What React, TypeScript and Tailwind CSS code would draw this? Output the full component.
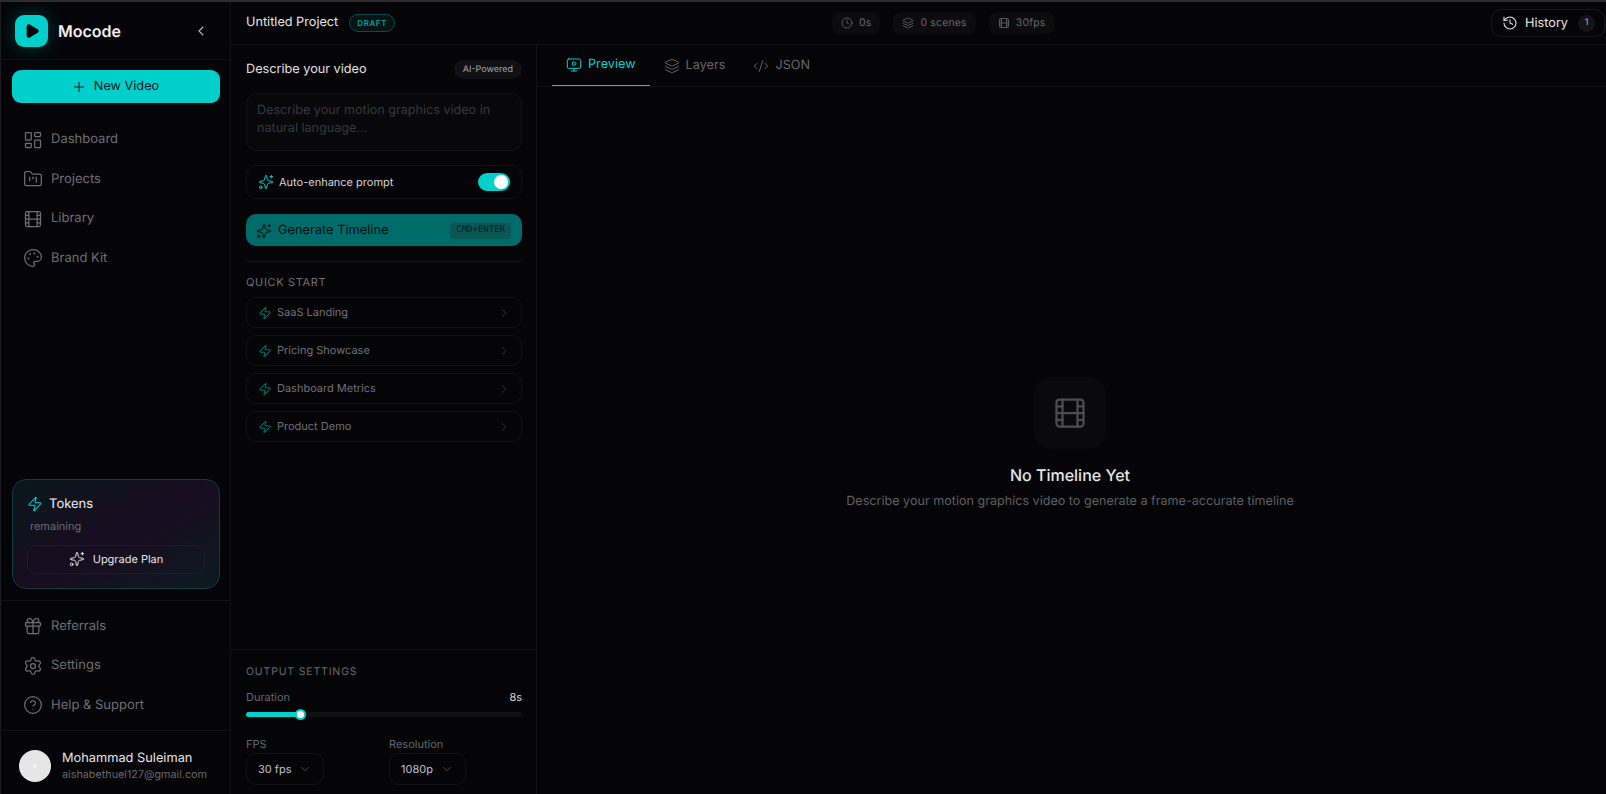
import React from "react";
import { Plus, LayoutDashboard, FolderKanban, Palette, Gift, Settings, CircleHelp, Zap, Sparkles, ChevronLeft, ChevronRight, ChevronDown, Play, History, Clock, Layers, MonitorPlay, CodeXml } from "lucide-react";

function Film({ className, strokeWidth = 2 }: { className?: string; strokeWidth?: number }) {
  return (
    <svg className={className} viewBox="0 0 24 24" fill="none" stroke="currentColor" strokeWidth={strokeWidth} strokeLinecap="round" strokeLinejoin="round">
      <rect width="18" height="18" x="3" y="3" rx="2" />
      <path d="M7 3v18" />
      <path d="M3 7.5h4" />
      <path d="M3 12h18" />
      <path d="M3 16.5h4" />
      <path d="M17 3v18" />
      <path d="M17 7.5h4" />
      <path d="M17 16.5h4" />
    </svg>
  );
}

function NavItem({ icon: Icon, label }: { icon: any; label: string }) {
  return (
    <div className="flex h-[39.5px] items-center gap-[8px] pl-[11px] text-[13px] text-[#6e6e73]">
      <Icon className="h-[20px] w-[20px]" strokeWidth={1.5} />
      <span>{label}</span>
    </div>
  );
}

function Chip({ icon: Icon, label }: { icon: any; label: string }) {
  return (
    <div className="flex h-[22px] items-center gap-[6px] rounded-[8px] bg-[#0c0c0f] px-[9px] text-[10.4px] tracking-[0.02em] text-[#66666b]">
      <Icon className="h-[12px] w-[12px]" strokeWidth={1.6} />
      <span>{label}</span>
    </div>
  );
}

function Quick({ label }: { label: string }) {
  return (
    <div className="flex h-[31px] items-center rounded-[10px] border border-[#131316] pl-[11px] pr-[10px] text-[11px] text-[#707075]">
      <Zap className="h-[14px] w-[14px] text-[#008480]" strokeWidth={1.6} />
      <span className="ml-[5px]">{label}</span>
      <ChevronRight className="ml-auto h-[14px] w-[14px] text-[#3c3c40]" strokeWidth={1.5} />
    </div>
  );
}

function Tab({ icon: Icon, label, active }: { icon: any; label: string; active?: boolean }) {
  return (
    <div className={`flex h-[41px] items-center gap-[6px] px-[14px] text-[12.7px] ${active ? "border-b border-[#00cfcb] text-[#00cfcb]" : "text-[#66666b]"}`}>
      <Icon className="h-[16px] w-[16px]" strokeWidth={1.5} />
      <span>{label}</span>
    </div>
  );
}

function Select({ label, value, w }: { label: string; value: string; w: string }) {
  return (
    <div className="flex flex-col">
      <span className="text-[11px] leading-[14px] text-[#66666b]">{label}</span>
      <div className={`mt-[2px] flex h-[32px] items-center justify-between rounded-[10px] border border-[#141417] pl-[11px] pr-[11px] text-[11px] text-[#c4c4c8] ${w}`}>
        <span>{value}</span>
        <ChevronDown className="h-[14px] w-[14px] text-[#55555a]" strokeWidth={1.5} />
      </div>
    </div>
  );
}

export default function App() {
  return (
    <div className="flex h-[794px] w-[1606px] flex-col overflow-hidden bg-[#050508] text-white antialiased [text-rendering:geometricPrecision]" style={{ fontFamily: "Inter, 'Noto Sans', sans-serif" }}>
      <div className="h-[2px] shrink-0 bg-[#2c2c30]" />
      <div className="flex min-h-0 flex-1 border-l border-[#1c1c20]">
        <aside className="flex w-[230px] shrink-0 flex-col border-r border-[#131316]">
          <div className="flex h-[58px] shrink-0 items-center border-b border-[#111114] pl-[14px] pr-[21px]">
            <div className="flex h-[32px] w-[33px] items-center justify-center rounded-[9px] bg-[#00cfcb] shadow-[0_0_18px_rgba(0,207,203,0.28)]">
              <Play className="h-[16px] w-[16px] fill-[#05050a] text-[#05050a]" strokeWidth={2} />
            </div>
            <span className="ml-[10px] text-[16px] font-semibold text-[#f0f0f0]">Mocode</span>
            <ChevronLeft className="ml-auto h-[16px] w-[16px] text-[#b5b5b8]" strokeWidth={1.6} />
          </div>
          <div className="pl-[11px] pr-[10px] pt-[10px]">
            <div className="flex h-[33px] items-center justify-center gap-[7px] rounded-[9px] bg-[#00cfcb] pr-[2px] pt-[1px] text-[12.7px] text-[#06161a]">
              <Plus className="h-[16px] w-[16px]" strokeWidth={1.5} />
              <span>New Video</span>
            </div>
          </div>
          <nav className="flex flex-col px-[11px] pt-[17px]">
            <NavItem icon={LayoutDashboard} label="Dashboard" />
            <NavItem icon={FolderKanban} label="Projects" />
            <NavItem icon={Film} label="Library" />
            <NavItem icon={Palette} label="Brand Kit" />
          </nav>
          <div className="mt-auto pb-[11px] pl-[11px] pr-[10px]">
            <div className="h-[110px] rounded-[14px] border border-[#0f3d42] bg-gradient-to-br from-[#07171b] via-[#180c20] to-[#0a1a1f] px-[14px] pt-[15px]">
              <div className="flex items-center gap-[6px] text-[13px] text-[#eeeeee]">
                <Zap className="h-[16px] w-[16px] text-[#00cfcb]" strokeWidth={1.6} />
                <span>Tokens</span>
              </div>
              <div className="mt-[4px] pl-[3px] text-[11px] text-[#6a6a70]">remaining</div>
              <div className="mt-[10px] flex h-[29px] items-center justify-center gap-[8px] rounded-[9px] border border-[#1d1d22] text-[11px] text-[#e5e5e5]">
                <Sparkles className="h-[16px] w-[16px]" strokeWidth={1.5} />
                <span>Upgrade Plan</span>
              </div>
            </div>
          </div>
          <div className="flex flex-col border-t border-[#131316] px-[11px] pb-[5px] pt-[6px]">
            <NavItem icon={Gift} label="Referrals" />
            <NavItem icon={Settings} label="Settings" />
            <NavItem icon={CircleHelp} label="Help & Support" />
          </div>
          <div className="flex h-[64px] shrink-0 items-center gap-[11px] border-t border-[#131316] pl-[18px] pt-[7px]">
            <div className="flex h-[32px] w-[32px] items-center justify-center rounded-full bg-[#e6e6e6]">
              <div className="h-[4px] w-[4px] rounded-full bg-[#f4f4f4]" />
            </div>
            <div className="flex flex-col">
              <span className="pt-[1px] text-[12.8px] leading-[16px] text-[#e5e5e5]">Mohammad Suleiman</span>
              <span className="text-[10.8px] leading-[15px] text-[#66666b]">aishabethuel127@gmail.com</span>
            </div>
          </div>
        </aside>
        <div className="flex min-w-0 flex-1 flex-col">
          <header className="relative flex h-[43px] shrink-0 items-center border-b border-[#111114] pl-[15px] pr-[1px]">
            <span className="text-[12.7px] text-[#e5e5e5]">Untitled Project</span>
            <span className="ml-[11px] flex h-[18px] items-center rounded-full border border-[#0b4a4c] bg-[#061414] px-[7px] text-[8px] font-medium tracking-[0.08em] text-[#00b5b1]">DRAFT</span>
            <div className="absolute left-[601px] top-[10px] flex gap-[13px]">
              <Chip icon={Clock} label="0s" />
              <Chip icon={Layers} label="0 scenes" />
              <Chip icon={Film} label="30fps" />
            </div>
            <div className="ml-auto flex h-[28px] items-center gap-[7px] rounded-[10px] border border-[#19191d] pl-[10px] pr-[9px] text-[12.7px] text-[#e5e5e5]">
              <History className="h-[16px] w-[16px]" strokeWidth={1.6} />
              <span className="pt-[1px]">History</span>
              <span className="ml-[3px] flex h-[17px] w-[17px] items-center justify-center rounded-full bg-[#151518] text-[9px] text-[#b0b0b4]">1</span>
            </div>
          </header>
          <div className="flex min-h-0 flex-1">
            <section className="flex w-[306px] shrink-0 flex-col border-r border-[#131316]">
              <div className="flex-1 pl-[15px] pr-[14px] pt-[15px]">
                <div className="flex h-[19px] items-center justify-between">
                  <span className="pt-[1px] text-[12.7px] text-[#e0e0e0]">Describe your video</span>
                  <span className="flex h-[19px] items-center rounded-full bg-[#111115] px-[9px] text-[9px] text-[#a5a5aa]">AI-Powered</span>
                </div>
                <div className="mt-[14px] h-[58px] rounded-[10px] border border-[#131316] bg-[#08080a] px-[10px] py-[8px] text-[12.6px] leading-[18px] text-[#38383c]">
                  Describe your motion graphics video in natural language...
                </div>
                <div className="mt-[14px] flex h-[34px] items-center rounded-[10px] border border-[#131316] pl-[11px] pr-[11px] text-[11px] text-[#d5d5d8]">
                  <Sparkles className="h-[16px] w-[16px] text-[#00cfcb]" strokeWidth={1.5} />
                  <span className="ml-[5px]">Auto-enhance prompt</span>
                  <div className="ml-auto flex h-[18px] w-[32px] items-center justify-end rounded-full bg-[#00cfcb] pr-[2px]">
                    <div className="h-[14px] w-[14px] rounded-full bg-white" />
                  </div>
                </div>
                <div className="mt-[15px] flex h-[32px] items-center rounded-[10px] bg-[#006b68] pl-[10px] pr-[11px] pt-[1px] text-[12.8px] text-[#040f10]">
                  <Sparkles className="h-[16px] w-[16px]" strokeWidth={1.5} />
                  <span className="ml-[6px]">Generate Timeline</span>
                  <span className="ml-auto flex h-[16px] items-center rounded-[4px] bg-[#0a5856] px-[6px] text-[9px] text-[#06201f]" style={{ fontFamily: "'DejaVu Sans Mono', monospace" }}>CMD+ENTER</span>
                </div>
                <div className="mt-[15px] border-t border-[#18181b]" />
                <div className="mt-[13px] text-[11px] leading-[14px] tracking-[0.06em] text-[#707075]">QUICK START</div>
                <div className="mt-[8px] flex flex-col gap-[7px]">
                  <Quick label="SaaS Landing" />
                  <Quick label="Pricing Showcase" />
                  <Quick label="Dashboard Metrics" />
                  <Quick label="Product Demo" />
                </div>
              </div>
              <div className="h-[145px] shrink-0 border-t border-[#121215] pl-[15px] pr-[14px] pt-[15px]">
                <div className="text-[10.5px] leading-[13px] tracking-[0.08em] text-[#66666b]">OUTPUT SETTINGS</div>
                <div className="mt-[12px] flex items-center justify-between text-[11px] leading-[14px]">
                  <span className="text-[#66666b]">Duration</span>
                  <span className="text-[#d5d5d8]">8s</span>
                </div>
                <div className="relative mt-[8px] h-[5px] rounded-full bg-[#111114]">
                  <div className="h-[5px] w-[54px] rounded-full bg-[#00cfcb]" />
                  <div className="absolute left-[49px] top-[-3px] h-[11px] w-[11px] rounded-full border-2 border-[#00cfcb] bg-white" />
                </div>
                <div className="mt-[20px] flex gap-[65px]">
                  <Select label="FPS" value="30 fps" w="w-[78px]" />
                  <Select label="Resolution" value="1080p" w="w-[77px]" />
                </div>
              </div>
            </section>
            <main className="flex min-w-0 flex-1 flex-col">
              <div className="flex h-[42px] shrink-0 items-start border-b border-[#111114] pl-[15px]">
                <Tab icon={MonitorPlay} label="Preview" active />
                <Tab icon={Layers} label="Layers" />
                <Tab icon={CodeXml} label="JSON" />
              </div>
              <div className="flex flex-1 flex-col items-center pr-[3px] pt-[290px]">
                <div className="flex h-[72px] w-[72px] items-center justify-center rounded-[18px] bg-[#0a0a0d]">
                  <Film className="h-[36px] w-[36px] text-[#4d4d51]" strokeWidth={1.5} />
                </div>
                <div className="mt-[15px] text-[16px] font-medium leading-[22px] text-[#e5e5e5]">No Timeline Yet</div>
                <div className="mt-[7px] text-[12.6px] leading-[18px] text-[#5f5f64]">Describe your motion graphics video to generate a frame-accurate timeline</div>
              </div>
            </main>
          </div>
        </div>
      </div>
    </div>
  );
}
